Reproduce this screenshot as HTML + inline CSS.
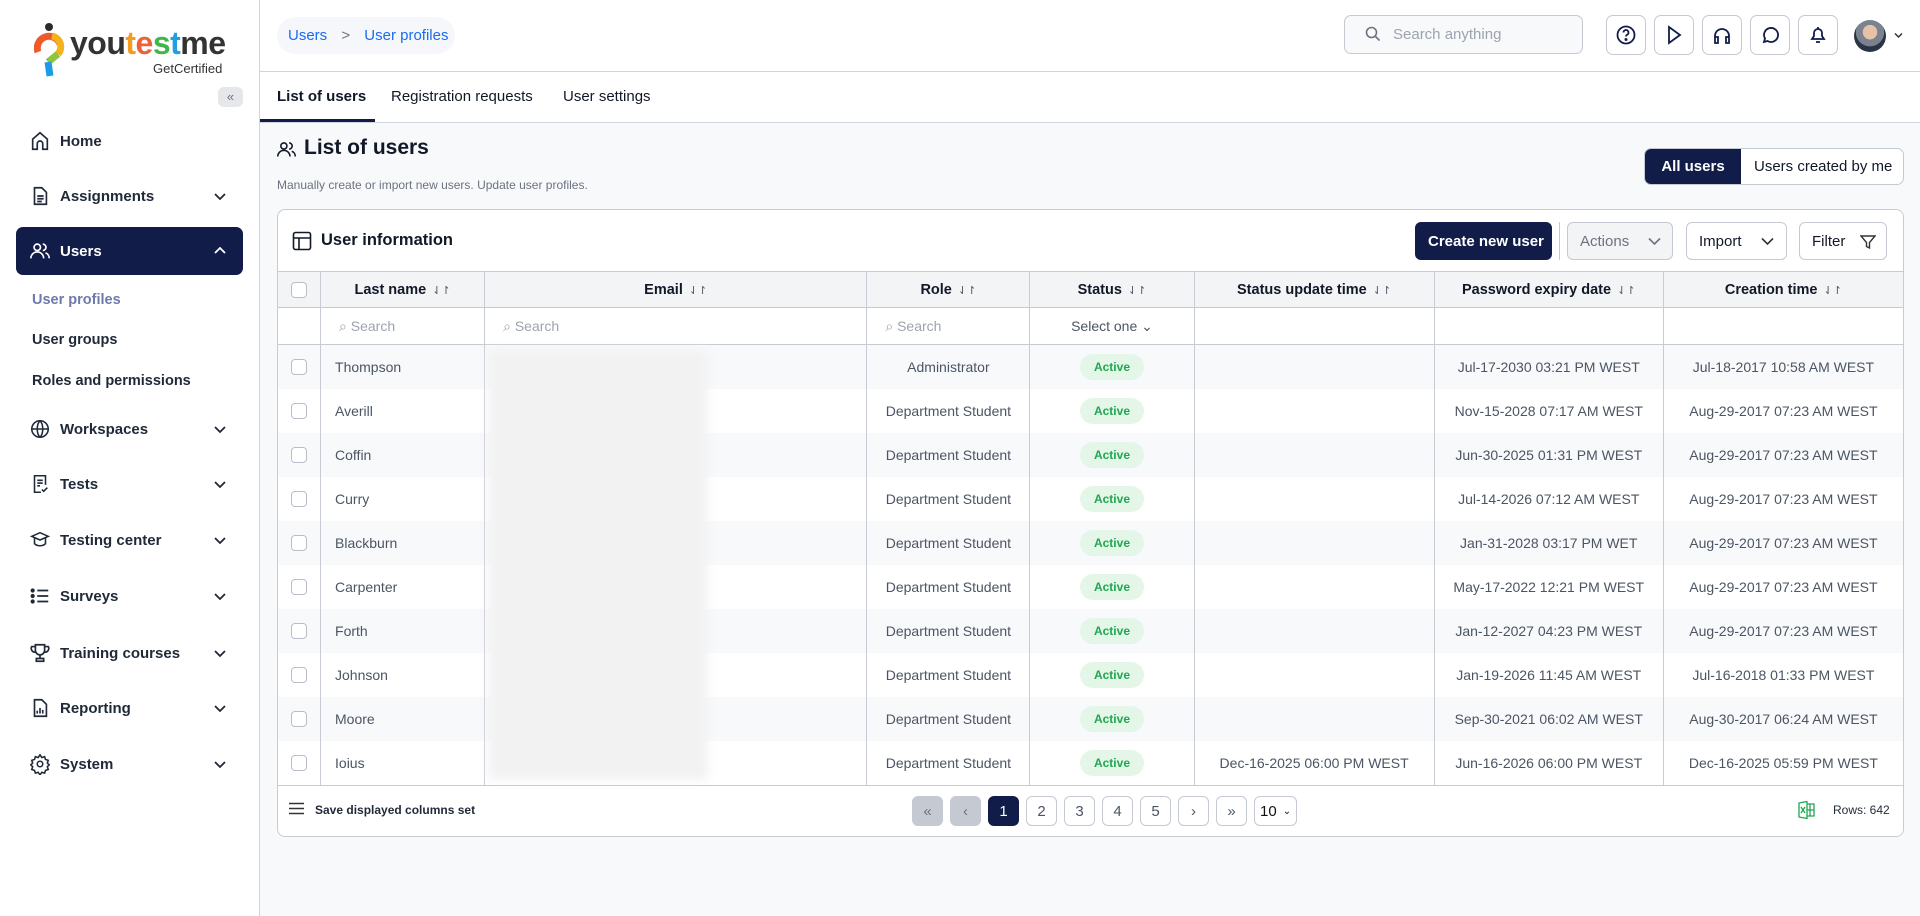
<!DOCTYPE html>
<html><head><meta charset="utf-8"><style>
*{box-sizing:border-box;margin:0;padding:0}
body{width:1920px;height:916px;overflow:hidden;font-family:"Liberation Sans",Arial,sans-serif;background:#f8f9fb;color:#111827;position:relative}
.abs{position:absolute}
.side{left:0;top:0;width:260px;height:916px;background:#fff;border-right:1px solid #d1d5db}
.nav{position:absolute;left:16px;width:227px;height:46px;display:flex;align-items:center;font-size:15px;font-weight:bold;color:#1f2937}
.nav svg.ic{position:absolute;left:13px;width:22px;height:22px}
.nav span{position:absolute;left:44px}
.nav svg.ch{position:absolute;left:196px;width:16px;height:16px}
.sub{position:absolute;left:32px;font-size:14.5px;font-weight:bold;color:#1f2937}
.top{left:260px;top:0;width:1660px;height:72px;background:#fff;border-bottom:1px solid #d1d5db}
.tabs{left:260px;top:72px;width:1660px;height:51px;background:#fff;border-bottom:1px solid #d1d5db}
.ib{position:absolute;top:15px;width:40px;height:40px;border:1px solid #c4c9d2;border-radius:7px;background:#fff;display:flex;align-items:center;justify-content:center}
.btn{position:absolute;top:222px;height:38px;border:1px solid #c4c9d2;border-radius:6px;background:#fff;font-size:15px;display:flex;align-items:center;padding-left:12px}
table{border-collapse:collapse;table-layout:fixed;position:absolute;left:277px;top:271px;width:1627px}
td,th{border:1px solid #c7ccd4;font-size:14px;text-align:center;white-space:nowrap;overflow:hidden}
th{height:36px;background:#f3f4f6;font-weight:bold;color:#111827;font-size:14.5px}
tr.f td{height:37px;color:#9ca3af;text-align:left;padding-left:18px}
tr.d td{height:44px;color:#4b5563;border-top:none;border-bottom:none}
tr.d:nth-child(odd) td{background:#f8f9fb}
tr.d td:first-child,tr.f td:first-child{padding-left:0;text-align:center}
tr.d td.ln{text-align:left;padding-left:14px}
.cb{display:inline-block;width:16px;height:16px;border:1px solid #b8bec8;border-radius:4px;background:#fff;vertical-align:middle}
.act{display:inline-block;background:#e3f6e8;color:#22a652;font-size:12px;font-weight:bold;border-radius:14px;padding:6px 14px}
.sa{font-size:11px;color:#4b5563;font-weight:normal;margin-left:6px}
.pg{position:absolute;top:796px;width:31px;height:30px;border:1px solid #c4c9d2;border-radius:6px;background:#fff;font-size:15px;color:#4b5563;display:flex;align-items:center;justify-content:center}
</style></head><body>
<div class="abs side">
  <svg class="abs" style="left:34px;top:22px" width="32" height="56" viewBox="0 0 32 56"><circle cx="15" cy="5" r="4" fill="#2a2a2a"/><path d="M4 30 A11 11 0 0 1 26 22" stroke="#f05a28" stroke-width="7" fill="none"/><path d="M18 14 A11 11 0 0 1 24 32" stroke="#f6b21a" stroke-width="7" fill="none"/><path d="M24 32 L14 40" stroke="#8dc63f" stroke-width="7"/><path d="M14 40 L16 54" stroke="#1e9be8" stroke-width="7"/></svg>
  <div class="abs" style="left:70px;top:25px;font-size:32px;font-weight:bold;letter-spacing:-0.5px;color:#333">you<span style="color:#f39c1f">t</span><span style="color:#e9623a">e</span><span style="color:#3fb54a">s</span><span style="color:#1fa0e0">t</span>me</div>
  <div class="abs" style="left:153px;top:61px;font-size:13px;color:#333">GetCertified</div>
  <div class="abs" style="left:218px;top:87px;width:25px;height:20px;background:#e5e7eb;border-radius:6px;color:#6b7280;font-size:13px;text-align:center;line-height:19px">«</div>

  <div class="nav" style="top:118px"><svg class="ic" viewBox="0 0 24 24" fill="none" stroke="#1f2937" stroke-width="1.8"><path d="M4 21V10l8-7 8 7v11h-5v-6a3 3 0 0 0-6 0v6z"/></svg><span>Home</span></div>
  <div class="nav" style="top:173px"><svg class="ic" viewBox="0 0 24 24" fill="none" stroke="#1f2937" stroke-width="1.8"><path d="M6 3h8l5 5v13H6z M9 12h7M9 15h7M9 18h5"/></svg><span>Assignments</span><svg class="ch" viewBox="0 0 16 16" fill="none" stroke="#1f2937" stroke-width="1.8"><path d="M3 6l5 5 5-5"/></svg></div>
  <div class="nav" style="top:227px;background:#111d48;border-radius:7px;color:#fff;height:48px"><svg class="ic" viewBox="0 0 24 24" fill="none" stroke="#fff" stroke-width="1.8"><circle cx="9" cy="8" r="3.5"/><path d="M2 20a7 7 0 0 1 14 0M15 4.5a3.5 3.5 0 0 1 0 7M18 14a6 6 0 0 1 4 6"/></svg><span>Users</span><svg class="ch" viewBox="0 0 16 16" fill="none" stroke="#fff" stroke-width="1.8"><path d="M3 10l5-5 5 5"/></svg></div>
  <div class="sub" style="top:292px;color:#6f7aab">User profiles</div>
  <div class="sub" style="top:332px">User groups</div>
  <div class="sub" style="top:373px">Roles and permissions</div>
  <div class="nav" style="top:406px"><svg class="ic" viewBox="0 0 24 24" fill="none" stroke="#1f2937" stroke-width="1.7"><circle cx="12" cy="12" r="9"/><path d="M3 12h18M12 3c-4 4-4 14 0 18M12 3c4 4 4 14 0 18"/></svg><span>Workspaces</span><svg class="ch" viewBox="0 0 16 16" fill="none" stroke="#1f2937" stroke-width="1.8"><path d="M3 6l5 5 5-5"/></svg></div>
  <div class="nav" style="top:461px"><svg class="ic" viewBox="0 0 24 24" fill="none" stroke="#1f2937" stroke-width="1.7"><path d="M13 21H6V3h12v10M9 8h6M9 11h6M9 14h3M14 18l2 2 4-4"/></svg><span>Tests</span><svg class="ch" viewBox="0 0 16 16" fill="none" stroke="#1f2937" stroke-width="1.8"><path d="M3 6l5 5 5-5"/></svg></div>
  <div class="nav" style="top:517px"><svg class="ic" viewBox="0 0 24 24" fill="none" stroke="#1f2937" stroke-width="1.7"><path d="M12 4l9 4-9 4-9-4zM6 10v6c3 3 9 3 12 0v-6"/></svg><span>Testing center</span><svg class="ch" viewBox="0 0 16 16" fill="none" stroke="#1f2937" stroke-width="1.8"><path d="M3 6l5 5 5-5"/></svg></div>
  <div class="nav" style="top:573px"><svg class="ic" viewBox="0 0 24 24" fill="none" stroke="#1f2937" stroke-width="2"><path d="M9 6h12M9 12h12M9 18h12"/><circle cx="4" cy="6" r="1.3" fill="#1f2937"/><circle cx="4" cy="12" r="1.3" fill="#1f2937"/><circle cx="4" cy="18" r="1.3" fill="#1f2937"/></svg><span>Surveys</span><svg class="ch" viewBox="0 0 16 16" fill="none" stroke="#1f2937" stroke-width="1.8"><path d="M3 6l5 5 5-5"/></svg></div>
  <div class="nav" style="top:630px"><svg class="ic" viewBox="0 0 24 24" fill="none" stroke="#1f2937" stroke-width="1.8"><path d="M7 3h10v6a5 5 0 0 1-10 0zM7 5H3a4 4 0 0 0 4 6M17 5h4a4 4 0 0 1-4 6M12 14v4M8 21h8v-3H8z"/></svg><span>Training courses</span><svg class="ch" viewBox="0 0 16 16" fill="none" stroke="#1f2937" stroke-width="1.8"><path d="M3 6l5 5 5-5"/></svg></div>
  <div class="nav" style="top:685px"><svg class="ic" viewBox="0 0 24 24" fill="none" stroke="#1f2937" stroke-width="1.8"><path d="M6 3h8l5 5v13H6zM9 18v-3M12 18v-6M15 18v-4"/></svg><span>Reporting</span><svg class="ch" viewBox="0 0 16 16" fill="none" stroke="#1f2937" stroke-width="1.8"><path d="M3 6l5 5 5-5"/></svg></div>
  <div class="nav" style="top:741px"><svg class="ic" viewBox="0 0 24 24" fill="none" stroke="#1f2937" stroke-width="1.7"><circle cx="12" cy="12" r="3"/><path d="M12 2l2 3 3-1 1 3 3 1-1 3 2 2-2 2 1 3-3 1-1 3-3-1-2 3-2-3-3 1-1-3-3-1 1-3-2-2 2-2-1-3 3-1 1-3 3 1z"/></svg><span>System</span><svg class="ch" viewBox="0 0 16 16" fill="none" stroke="#1f2937" stroke-width="1.8"><path d="M3 6l5 5 5-5"/></svg></div>
</div>

<div class="abs top">
  <div class="abs" style="left:17px;top:17px;width:178px;height:37px;background:#f5f7fa;border-radius:19px;font-size:15px;color:#1a6cf0;line-height:37px;padding-left:11px">Users <span style="color:#6b7280;margin:0 10px">&gt;</span> User profiles</div>
  <div class="abs" style="left:1084px;top:15px;width:239px;height:39px;border:1px solid #c4c9d2;border-radius:7px;background:#f8f9fb;font-size:15px;color:#9ca3af;line-height:37px;padding-left:48px">Search anything<svg class="abs" style="left:20px;top:10px" width="16" height="16" viewBox="0 0 16 16" fill="none" stroke="#6b7280" stroke-width="1.6"><circle cx="6.5" cy="6.5" r="5"/><path d="M10.5 10.5l4 4"/></svg></div>
  <div class="ib" style="left:1346px"><svg width="20" height="20" viewBox="0 0 20 20" fill="none" stroke="#111d48" stroke-width="1.8"><circle cx="10" cy="10" r="8.5"/><path d="M7.5 7.5a2.5 2.5 0 1 1 3.5 2.3c-.7.4-1 .9-1 1.7"/><circle cx="10" cy="14.5" r=".6" fill="#111d48"/></svg></div>
  <div class="ib" style="left:1394px"><svg width="20" height="20" viewBox="0 0 20 20" fill="none" stroke="#111d48" stroke-width="1.8"><path d="M5 2l11 8-11 8z"/></svg></div>
  <div class="ib" style="left:1442px"><svg width="20" height="20" viewBox="0 0 20 20" fill="none" stroke="#111d48" stroke-width="1.8"><path d="M3 15v-4a7 7 0 0 1 14 0v4M3 12h3v6H3zM14 12h3v6h-3z"/></svg></div>
  <div class="ib" style="left:1490px"><svg width="20" height="20" viewBox="0 0 20 20" fill="none" stroke="#111d48" stroke-width="1.8"><path d="M4 17l1-3.5A7 7 0 1 1 7.5 16z"/></svg></div>
  <div class="ib" style="left:1538px"><svg width="20" height="20" viewBox="0 0 20 20" fill="none" stroke="#111d48" stroke-width="1.8"><path d="M4 14h12l-2-3V8a4 4 0 0 0-8 0v3zM8 17h4M10 2v2"/></svg></div>
  <div class="abs" style="left:1594px;top:20px;width:32px;height:32px;border-radius:50%;background:radial-gradient(circle at 50% 38%,#e6c2a8 0 28%,#7a8290 29% 55%,#2b3445 56%)"></div>
  <svg class="abs" style="left:1634px;top:32px" width="9" height="7" viewBox="0 0 9 7" fill="none" stroke="#333" stroke-width="1.5"><path d="M1 1.5l3.5 3.5 3.5-3.5"/></svg>
</div>

<div class="abs tabs">
  <div class="abs" style="left:17px;top:16px;font-size:15px;font-weight:bold">List of users</div>
  <div class="abs" style="left:0;top:47px;width:115px;height:3px;background:#111d48"></div>
  <div class="abs" style="left:131px;top:16px;font-size:15px">Registration requests</div>
  <div class="abs" style="left:303px;top:16px;font-size:15px">User settings</div>
</div>

<svg class="abs" style="left:276px;top:139px" width="21" height="21" viewBox="0 0 24 24" fill="none" stroke="#111827" stroke-width="1.8"><circle cx="9" cy="8" r="3.5"/><path d="M2 20a7 7 0 0 1 14 0M15 4.5a3.5 3.5 0 0 1 0 7M18 14a6 6 0 0 1 4 6"/></svg>
<div class="abs" style="left:304px;top:136px;font-size:21px;font-weight:bold">List of users</div>
<div class="abs" style="left:277px;top:178px;font-size:12px;color:#6b7280">Manually create or import new users. Update user profiles.</div>
<div class="abs" style="left:1644px;top:148px;width:260px;height:37px;border:1px solid #c4c9d2;border-radius:7px;background:#fff;overflow:hidden;font-size:15px">
  <div class="abs" style="left:0;top:0;width:96px;height:37px;background:#111d48;color:#fff;font-weight:bold;text-align:center;line-height:35px">All users</div>
  <div class="abs" style="left:109px;top:0;line-height:35px">Users created by me</div>
</div>

<div class="abs" style="left:277px;top:209px;width:1627px;height:628px;background:#fff;border:1px solid #c7ccd4;border-radius:8px"></div>
<svg class="abs" style="left:292px;top:231px" width="20" height="20" viewBox="0 0 20 20" fill="none" stroke="#111827" stroke-width="1.6"><rect x="1.5" y="1.5" width="17" height="17" rx="2"/><path d="M1.5 7h17M7 7v11.5"/></svg>
<div class="abs" style="left:321px;top:231px;font-size:16.5px;font-weight:bold">User information</div>
<div class="btn" style="left:1415px;width:137px;background:#111d48;border-color:#111d48;color:#fff;font-weight:bold">Create new user</div>
<div class="abs" style="left:1559px;top:222px;width:1px;height:38px;background:#c4c9d2"></div>
<div class="btn" style="left:1567px;width:106px;background:#f3f4f6;color:#6b7280">Actions<svg class="abs" style="left:80px;top:14px" width="13" height="9" viewBox="0 0 13 9" fill="none" stroke="#6b7280" stroke-width="1.6"><path d="M1 1.5l5.5 5.5 5.5-5.5"/></svg></div>
<div class="btn" style="left:1686px;width:101px">Import<svg class="abs" style="left:74px;top:14px" width="13" height="9" viewBox="0 0 13 9" fill="none" stroke="#333" stroke-width="1.6"><path d="M1 1.5l5.5 5.5 5.5-5.5"/></svg></div>
<div class="btn" style="left:1799px;width:88px">Filter<svg class="abs" style="left:60px;top:11px" width="16" height="16" viewBox="0 0 16 16" fill="none" stroke="#333" stroke-width="1.4"><path d="M1 2h14l-5.5 6.5V14l-3-1.5V8.5z"/></svg></div>

<table>
<colgroup><col style="width:43px"><col style="width:164px"><col style="width:382px"><col style="width:163px"><col style="width:164px"><col style="width:240px"><col style="width:229px"><col style="width:240px"></colgroup>
<tr><th><span class="cb"></span></th><th>Last name<span class="sa">⇃↾</span></th><th>Email<span class="sa">⇃↾</span></th><th>Role<span class="sa">⇃↾</span></th><th>Status<span class="sa">⇃↾</span></th><th>Status update time<span class="sa">⇃↾</span></th><th>Password expiry date<span class="sa">⇃↾</span></th><th>Creation time<span class="sa">⇃↾</span></th></tr>
<tr class="f"><td></td><td>⌕ Search</td><td>⌕ Search</td><td>⌕ Search</td><td style="text-align:center;padding:0;color:#4b5563">Select one ⌄</td><td></td><td></td><td></td></tr>
<tr class="d"><td><span class="cb"></span></td><td class="ln">Thompson</td><td></td><td>Administrator</td><td><span class="act">Active</span></td><td></td><td>Jul-17-2030 03:21 PM WEST</td><td>Jul-18-2017 10:58 AM WEST</td></tr>
<tr class="d"><td><span class="cb"></span></td><td class="ln">Averill</td><td></td><td>Department Student</td><td><span class="act">Active</span></td><td></td><td>Nov-15-2028 07:17 AM WEST</td><td>Aug-29-2017 07:23 AM WEST</td></tr>
<tr class="d"><td><span class="cb"></span></td><td class="ln">Coffin</td><td></td><td>Department Student</td><td><span class="act">Active</span></td><td></td><td>Jun-30-2025 01:31 PM WEST</td><td>Aug-29-2017 07:23 AM WEST</td></tr>
<tr class="d"><td><span class="cb"></span></td><td class="ln">Curry</td><td></td><td>Department Student</td><td><span class="act">Active</span></td><td></td><td>Jul-14-2026 07:12 AM WEST</td><td>Aug-29-2017 07:23 AM WEST</td></tr>
<tr class="d"><td><span class="cb"></span></td><td class="ln">Blackburn</td><td></td><td>Department Student</td><td><span class="act">Active</span></td><td></td><td>Jan-31-2028 03:17 PM WET</td><td>Aug-29-2017 07:23 AM WEST</td></tr>
<tr class="d"><td><span class="cb"></span></td><td class="ln">Carpenter</td><td></td><td>Department Student</td><td><span class="act">Active</span></td><td></td><td>May-17-2022 12:21 PM WEST</td><td>Aug-29-2017 07:23 AM WEST</td></tr>
<tr class="d"><td><span class="cb"></span></td><td class="ln">Forth</td><td></td><td>Department Student</td><td><span class="act">Active</span></td><td></td><td>Jan-12-2027 04:23 PM WEST</td><td>Aug-29-2017 07:23 AM WEST</td></tr>
<tr class="d"><td><span class="cb"></span></td><td class="ln">Johnson</td><td></td><td>Department Student</td><td><span class="act">Active</span></td><td></td><td>Jan-19-2026 11:45 AM WEST</td><td>Jul-16-2018 01:33 PM WEST</td></tr>
<tr class="d"><td><span class="cb"></span></td><td class="ln">Moore</td><td></td><td>Department Student</td><td><span class="act">Active</span></td><td></td><td>Sep-30-2021 06:02 AM WEST</td><td>Aug-30-2017 06:24 AM WEST</td></tr>
<tr class="d"><td><span class="cb"></span></td><td class="ln">Ioius</td><td></td><td>Department Student</td><td><span class="act">Active</span></td><td>Dec-16-2025 06:00 PM WEST</td><td>Jun-16-2026 06:00 PM WEST</td><td>Dec-16-2025 05:59 PM WEST</td></tr>
</table>
<div class="abs" style="left:488px;top:350px;width:220px;height:430px;background:#f2f2f2;filter:blur(5px)"></div>
<div class="abs" style="left:278px;top:785px;width:1625px;height:1px;background:#c7ccd4"></div>

<svg class="abs" style="left:289px;top:802px" width="15" height="13" viewBox="0 0 15 13" stroke="#333" stroke-width="1.6"><path d="M0 1.5h15M0 6.5h15M0 11.5h15"/></svg>
<div class="abs" style="left:315px;top:803px;font-size:12px;font-weight:bold;color:#1f2937">Save displayed columns set</div>
<div class="pg" style="left:912px;background:#c5cad2;border-color:#c5cad2;color:#6b7280">«</div>
<div class="pg" style="left:950px;background:#c5cad2;border-color:#c5cad2;color:#6b7280">‹</div>
<div class="pg" style="left:988px;background:#111d48;border-color:#111d48;color:#fff">1</div>
<div class="pg" style="left:1026px">2</div>
<div class="pg" style="left:1064px">3</div>
<div class="pg" style="left:1102px">4</div>
<div class="pg" style="left:1140px">5</div>
<div class="pg" style="left:1178px">›</div>
<div class="pg" style="left:1216px">»</div>
<div class="pg" style="left:1254px;width:43px;color:#111;justify-content:flex-start;padding-left:5px">10<span style="font-size:10px;margin-left:6px">⌄</span></div>
<svg class="abs" style="left:1798px;top:801px" width="17" height="18" viewBox="0 0 17 18" fill="none" stroke="#22a652" stroke-width="1.3"><path d="M1 2l8-1.5v17L1 16z"/><path d="M9 3h7v12H9M3 6l4 6M7 6l-4 6M12 3v12M9 9h7"/></svg>
<div class="abs" style="left:1833px;top:803px;font-size:12px;color:#1f2937">Rows: 642</div>
</body></html>
